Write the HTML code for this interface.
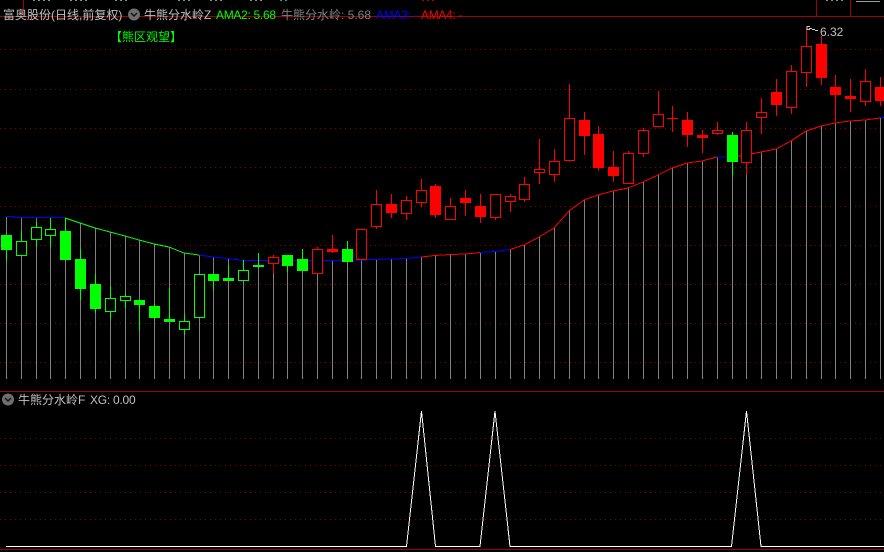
<!DOCTYPE html>
<html><head><meta charset="utf-8"><style>
html,body{margin:0;padding:0;background:#000;width:884px;height:552px;overflow:hidden}
#w{position:relative;width:884px;height:552px;overflow:hidden;background:#000}
svg{position:absolute;left:0;top:0}
.t{position:absolute;font:12px/14px "Liberation Sans","WenQuanYi Zen Hei","Noto Sans CJK SC",sans-serif;white-space:nowrap;color:#c0c0c0}
</style></head><body><div id="w">
<svg width="884" height="552" viewBox="0 0 884 552" shape-rendering="crispEdges" fill="none">
<path stroke="#a00000" d="M0 16.5H884M23.5 0V16M816.5 0V16M850.5 0V16M0 391.5H884M0 549.5H884"/>
<path stroke="#8c8c8c" stroke-dasharray="2 3" d="M33 0.5H50M70 0.5H90M115 0.5H130M178 0.5H190M210 0.5H225M250 0.5H262M826 0.5H845"/>
<path stroke="#a0a0a0" d="M856 1.5H880"/>
<path stroke="#00b0b0" stroke-dasharray="2 3" d="M280 0.5H290"/>
<path stroke="#b00000" stroke-dasharray="2 3" d="M422 0.5H435"/>
<path stroke="#8a0000" stroke-dasharray="1 4" d="M0 49.5H884M0 89.5H884M0 128.5H884M0 167.5H884M0 206.5H884M0 245.5H884M0 284.5H884M0 323.5H884M0 362.5H884M0 438.5H884M0 465.5H884M0 492.5H884M0 519.5H884"/>
<path stroke="#808080" d="M6.5 217V379M21.5 217V379M36.5 217V379M50.5 217V379M65.5 218V379M80.5 223V379M95.5 228V379M110.5 232V379M125.5 236V379M139.5 240V379M154.5 244V379M169.5 247V379M184.5 253V379M199.5 255V379M213.5 257V379M228.5 259V379M243.5 260V379M258.5 260V379M273.5 260V379M287.5 260V379M302.5 261V379M317.5 261V379M332.5 261V379M347.5 260V379M361.5 260V379M376.5 259V379M391.5 259V379M406.5 258V379M421.5 257V379M435.5 255V379M450.5 254V379M465.5 254V379M480.5 252V379M495.5 251V379M510.5 249V379M524.5 245V379M539.5 237V379M554.5 228V379M569.5 211V379M584.5 200V379M598.5 195V379M613.5 191V379M628.5 188V379M643.5 182V379M658.5 175V379M672.5 168V379M687.5 163V379M702.5 161V379M717.5 157V379M732.5 157V379M746.5 155V379M761.5 152V379M776.5 149V379M791.5 141V379M806.5 131V379M821.5 126V379M835.5 123V379M850.5 121V379M865.5 120V379M880.5 118V379"/>
<polyline stroke="#0000ff" points="6,216.5 14,216.5 14,217.5 65,217.5"/>
<polyline stroke="#00ff00" points="65,218 80,223 95,228 110,232 125,236 139,240 154,244 169,247 184,253 199,255"/>
<polyline stroke="#0000ff" points="199,255 213,257 228,258.5 243,260.5 302,260.5 347,260.5 376,259.5 406,258.5 421,257"/>
<polyline stroke="#ff0000" points="421,257 435,255.5 450,254.5 465,254 480,252.5"/>
<polyline stroke="#0000ff" points="480,252.5 495,251.5 510,249.5"/>
<polyline stroke="#ff0000" points="510,249.5 524,245 539,237 554,228 569,211 584,200 598,195 613,191 628,188 643,182 658,175 672,168 687,163 702,161 717,157"/>
<polyline stroke="#0000ff" points="717,157 732,157"/>
<polyline stroke="#ff0000" points="732,157 746,155 761,152 776,149 791,141 806,131 821,126 835,123 850,121 865,120 880,118"/>
<polyline stroke="#0000ff" points="880,117.5 884,117.5"/>
<path stroke="#00ff00" d="M6.5 235V261M21.5 231V256M36.5 222V247M50.5 218V247M65.5 218V260M80.5 249V300M95.5 274V313M110.5 286V319M125.5 293V308M139.5 300V331M154.5 304V319M169.5 288V322M184.5 315V335M199.5 274V317M213.5 274V290M228.5 265V281M243.5 260V280M258.5 253V268M287.5 255V272M302.5 249V271M347.5 241V262M732.5 132V177"/>
<path stroke="#ff0000" d="M273.5 255V273M317.5 247V273M332.5 235V253M361.5 229V259M376.5 190V229M391.5 194V218M406.5 196V220M421.5 179V207M435.5 184V218M450.5 198V219M465.5 190V216M480.5 194V223M495.5 194V220M510.5 194V212M524.5 177V202M539.5 139V184M554.5 149V182M569.5 84V161M584.5 112V155M598.5 126V171M613.5 151V182M628.5 151V183M643.5 128V157M658.5 91V127M672.5 106V132M687.5 112V147M702.5 130V153M717.5 122V135M746.5 122V175M761.5 98V134M776.5 79V116M791.5 65V114M806.5 28V87M821.5 36V85M835.5 75V122M850.5 79V112M865.5 69V106M880.5 77V106"/>
<g fill="#00ff00">
<rect x="1" y="235" width="11" height="15"/><rect x="60" y="231" width="11" height="29"/><rect x="75" y="259" width="11" height="30"/><rect x="90" y="284" width="11" height="25"/><rect x="134" y="300" width="11" height="5"/><rect x="149" y="306" width="11" height="12"/><rect x="164" y="319" width="11" height="3"/><rect x="208" y="274" width="11" height="7"/><rect x="223" y="278" width="11" height="3"/><rect x="253" y="265" width="11" height="2"/><rect x="282" y="255" width="11" height="11"/><rect x="297" y="259" width="11" height="12"/><rect x="342" y="249" width="11" height="13"/><rect x="727" y="135" width="11" height="27"/>
</g>
<g fill="#000" stroke="#00ff00">
<rect x="16.5" y="241.5" width="10" height="14"/><rect x="31.5" y="227.5" width="10" height="12"/><rect x="45.5" y="229.5" width="10" height="6"/><rect x="105.5" y="298.5" width="10" height="13"/><rect x="120.5" y="296.5" width="10" height="4"/><rect x="179.5" y="321.5" width="10" height="8"/><rect x="194.5" y="274.5" width="10" height="43"/><rect x="238.5" y="270.5" width="10" height="10"/>
</g>
<g fill="#000" stroke="#ff0000">
<rect x="268.5" y="257.5" width="10" height="6"/><rect x="312.5" y="249.5" width="10" height="24"/><rect x="356.5" y="229.5" width="10" height="30"/><rect x="371.5" y="204.5" width="10" height="22"/><rect x="401.5" y="200.5" width="10" height="13"/><rect x="416.5" y="190.5" width="10" height="12"/><rect x="445.5" y="206.5" width="10" height="13"/><rect x="490.5" y="194.5" width="10" height="23"/><rect x="505.5" y="196.5" width="10" height="5"/><rect x="519.5" y="184.5" width="10" height="15"/><rect x="534.5" y="169.5" width="10" height="3"/><rect x="549.5" y="161.5" width="10" height="13"/><rect x="564.5" y="118.5" width="10" height="42"/><rect x="623.5" y="153.5" width="10" height="30"/><rect x="638.5" y="130.5" width="10" height="23"/><rect x="653.5" y="114.5" width="10" height="12"/><rect x="712.5" y="130.5" width="10" height="3"/><rect x="741.5" y="130.5" width="10" height="32"/><rect x="756.5" y="112.5" width="10" height="5"/><rect x="786.5" y="71.5" width="10" height="36"/><rect x="801.5" y="46.5" width="10" height="26"/><rect x="860.5" y="81.5" width="10" height="20"/>
</g>
<g fill="#ff0000">
<rect x="327" y="249" width="11" height="3"/><rect x="386" y="204" width="11" height="9"/><rect x="430" y="186" width="11" height="29"/><rect x="460" y="198" width="11" height="5"/><rect x="475" y="206" width="11" height="11"/><rect x="579" y="120" width="11" height="16"/><rect x="593" y="134" width="11" height="34"/><rect x="608" y="167" width="11" height="9"/><rect x="667" y="118" width="11" height="1"/><rect x="682" y="120" width="11" height="15"/><rect x="697" y="135" width="11" height="3"/><rect x="771" y="92" width="11" height="13"/><rect x="816" y="44" width="11" height="34"/><rect x="830" y="87" width="11" height="8"/><rect x="845" y="96" width="11" height="3"/><rect x="875" y="87" width="11" height="14"/>
</g>
<path stroke="#c8c8c8" d="M807 26.5H810M807 26V30M807 29.5H810M809 28.5H812M812 29.5H815M815 30.5H818"/>
<path stroke="#fff" d="M6 546.5H406.5L421.5 411L435.5 546.5H480L495 411L510 546.5H731.5L746.5 411L761 546.5H884"/>
<g shape-rendering="geometricPrecision">
<circle cx="134" cy="14.5" r="6" fill="#6e6e6e"/><path stroke="#111" stroke-width="1.4" d="M131 13l3 3 3-3"/>
<circle cx="8" cy="399.5" r="6" fill="#6e6e6e"/><path stroke="#111" stroke-width="1.4" d="M5 398l3 3 3-3"/>
</g>
</svg>
<div class="t" style="left:3px;top:8px">富奥股份(日线,前复权)</div>
<div class="t" style="left:144px;top:8px">牛熊分水岭Z</div>
<div class="t" style="left:216px;top:8px;color:#00ff00;letter-spacing:-.3px">AMA2: 5.68</div>
<div class="t" style="left:281px;top:8px;color:#808080">牛熊分水岭: 5.68</div>
<div class="t" style="left:376px;top:8px;color:#0000ff;letter-spacing:-.3px">AMA3: -</div>
<div class="t" style="left:421px;top:8px;color:#ff0000;letter-spacing:-.3px">AMA4: -</div>
<div class="t" style="left:110px;top:30px;color:#00ff00">【熊区观望】</div>
<div class="t" style="left:820px;top:25px">6.32</div>
<div class="t" style="left:18px;top:393px">牛熊分水岭F</div>
<div class="t" style="left:90px;top:393px;letter-spacing:-.25px">XG: 0.00</div>
</div></body></html>
